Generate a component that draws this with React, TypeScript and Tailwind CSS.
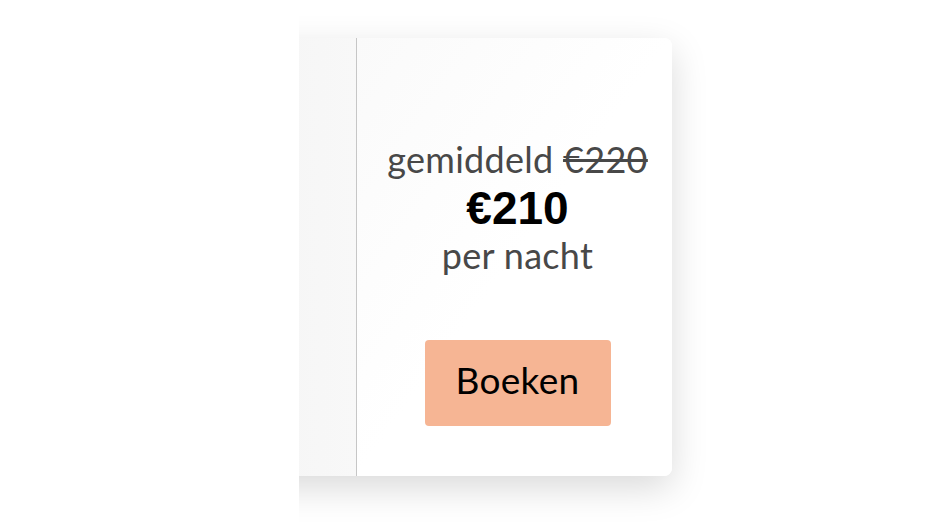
export default function App() {
  return (
    <div className="flex h-[523px] w-full bg-white" style={{ fontFamily: 'Lato, "Open Sans", sans-serif' }}>
      <div className="w-[299px] shrink-0" />
      <div className="flex-1 overflow-hidden pt-[38px]">
        <div className="-ml-[200px] flex h-[438px] w-[573px] rounded-lg bg-white shadow-[0_12px_36px_rgba(0,0,0,0.15)]">
          <div className="w-[257px] shrink-0 rounded-l-lg bg-gradient-to-r from-[#f1f1f1] to-[#f8f8f8]" />
          <div className="flex w-[316px] flex-col items-center rounded-r-lg border-l border-[#c6c6c6] bg-gradient-to-br from-[#fafafa] via-white to-white pl-[6px] pt-[100px]">
            <div className="text-[36px] leading-[42px] tracking-[0.3px] text-[#484848]">
              gemiddeld <span className="line-through">€220</span>
            </div>
            <div
              className="mt-[3px] text-[46px] font-bold leading-[50px] text-black"
              style={{ fontFamily: '"Liberation Sans", Arial, sans-serif' }}
            >
              €210
            </div>
            <div className="mt-[1px] text-[36px] leading-[42px] tracking-[0.3px] text-[#484848]">per nacht</div>
            <button className="mt-[64px] flex h-[86px] w-[186px] items-center justify-center rounded-[4px] bg-[#f6b594] pb-[6px] text-[37px] tracking-[0.3px] text-black">
              Boeken
            </button>
          </div>
        </div>
      </div>
    </div>
  );
}
